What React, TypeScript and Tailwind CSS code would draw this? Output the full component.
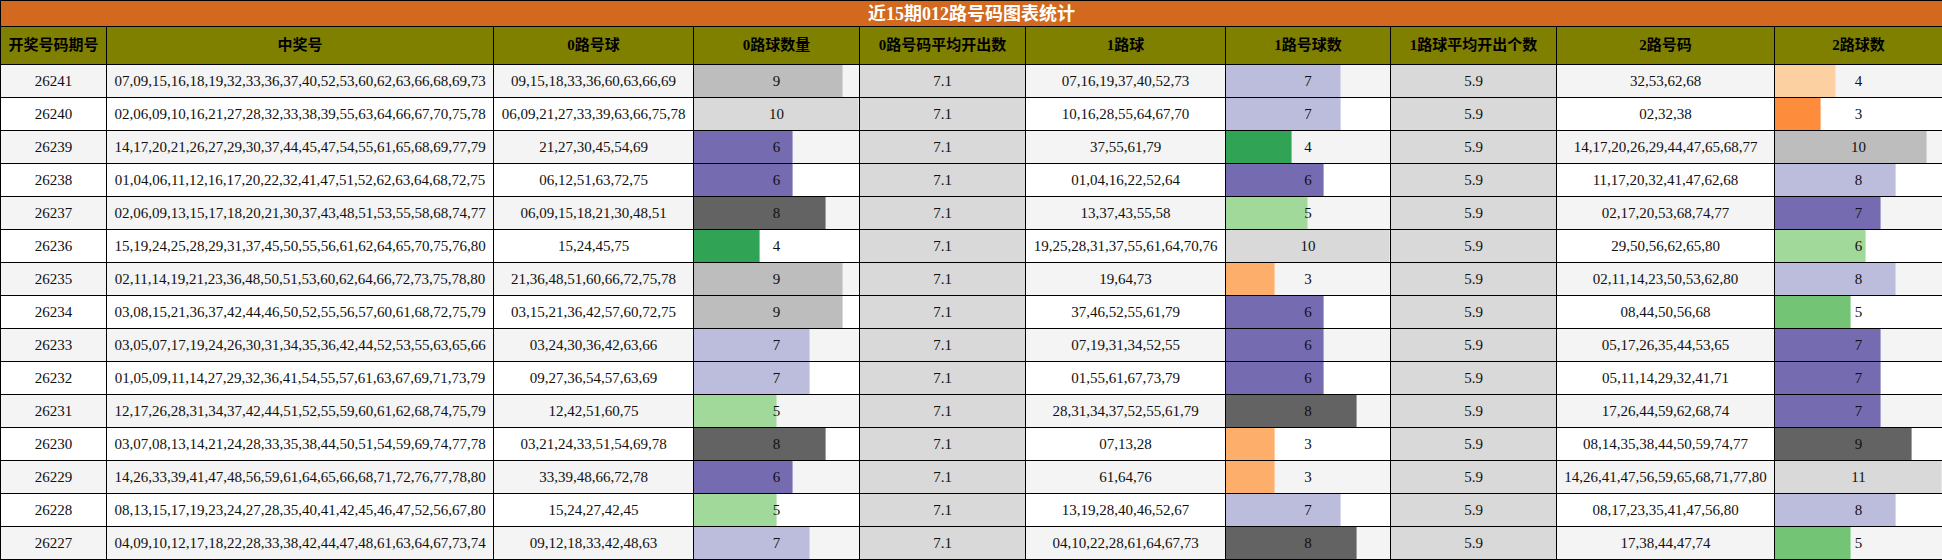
import React from "react";

type Row = [number, string, string, number, string, number, string, number];

const rows: Row[] = [
  [26241, "07,09,15,16,18,19,32,33,36,37,40,52,53,60,62,63,66,68,69,73", "09,15,18,33,36,60,63,66,69", 9, "07,16,19,37,40,52,73", 7, "32,53,62,68", 4],
  [26240, "02,06,09,10,16,21,27,28,32,33,38,39,55,63,64,66,67,70,75,78", "06,09,21,27,33,39,63,66,75,78", 10, "10,16,28,55,64,67,70", 7, "02,32,38", 3],
  [26239, "14,17,20,21,26,27,29,30,37,44,45,47,54,55,61,65,68,69,77,79", "21,27,30,45,54,69", 6, "37,55,61,79", 4, "14,17,20,26,29,44,47,65,68,77", 10],
  [26238, "01,04,06,11,12,16,17,20,22,32,41,47,51,52,62,63,64,68,72,75", "06,12,51,63,72,75", 6, "01,04,16,22,52,64", 6, "11,17,20,32,41,47,62,68", 8],
  [26237, "02,06,09,13,15,17,18,20,21,30,37,43,48,51,53,55,58,68,74,77", "06,09,15,18,21,30,48,51", 8, "13,37,43,55,58", 5, "02,17,20,53,68,74,77", 7],
  [26236, "15,19,24,25,28,29,31,37,45,50,55,56,61,62,64,65,70,75,76,80", "15,24,45,75", 4, "19,25,28,31,37,55,61,64,70,76", 10, "29,50,56,62,65,80", 6],
  [26235, "02,11,14,19,21,23,36,48,50,51,53,60,62,64,66,72,73,75,78,80", "21,36,48,51,60,66,72,75,78", 9, "19,64,73", 3, "02,11,14,23,50,53,62,80", 8],
  [26234, "03,08,15,21,36,37,42,44,46,50,52,55,56,57,60,61,68,72,75,79", "03,15,21,36,42,57,60,72,75", 9, "37,46,52,55,61,79", 6, "08,44,50,56,68", 5],
  [26233, "03,05,07,17,19,24,26,30,31,34,35,36,42,44,52,53,55,63,65,66", "03,24,30,36,42,63,66", 7, "07,19,31,34,52,55", 6, "05,17,26,35,44,53,65", 7],
  [26232, "01,05,09,11,14,27,29,32,36,41,54,55,57,61,63,67,69,71,73,79", "09,27,36,54,57,63,69", 7, "01,55,61,67,73,79", 6, "05,11,14,29,32,41,71", 7],
  [26231, "12,17,26,28,31,34,37,42,44,51,52,55,59,60,61,62,68,74,75,79", "12,42,51,60,75", 5, "28,31,34,37,52,55,61,79", 8, "17,26,44,59,62,68,74", 7],
  [26230, "03,07,08,13,14,21,24,28,33,35,38,44,50,51,54,59,69,74,77,78", "03,21,24,33,51,54,69,78", 8, "07,13,28", 3, "08,14,35,38,44,50,59,74,77", 9],
  [26229, "14,26,33,39,41,47,48,56,59,61,64,65,66,68,71,72,76,77,78,80", "33,39,48,66,72,78", 6, "61,64,76", 3, "14,26,41,47,56,59,65,68,71,77,80", 11],
  [26228, "08,13,15,17,19,23,24,27,28,35,40,41,42,45,46,47,52,56,67,80", "15,24,27,42,45", 5, "13,19,28,40,46,52,67", 7, "08,17,23,35,41,47,56,80", 8],
  [26227, "04,09,10,12,17,18,22,28,33,38,42,44,47,48,61,63,64,67,73,74", "09,12,18,33,42,48,63", 7, "04,10,22,28,61,64,67,73", 8, "17,38,44,47,74", 5],
];

const c01: Record<number, string> = {
  3: "#fdae6b",
  4: "#31a354",
  5: "#a1d99b",
  6: "#756bb1",
  7: "#bcbddc",
  8: "#636363",
  9: "#bdbdbd",
  10: "#d9d9d9",
};
const c2: Record<number, string> = {
  3: "#fd8d3c",
  4: "#fdd0a2",
  5: "#74c476",
  6: "#a1d99b",
  7: "#756bb1",
  8: "#bcbddc",
  9: "#636363",
  10: "#bdbdbd",
  11: "#d9d9d9",
};

const widths = [106, 387, 200, 166, 166, 200, 165, 166, 218, 168];
const headers = [
  "开奖号码期号",
  "中奖号",
  "0路号球",
  "0路球数量",
  "0路号码平均开出数",
  "1路球",
  "1路号球数",
  "1路球平均开出个数",
  "2路号码",
  "2路球数",
];

function BarCell({ v, max, color }: { v: number; max: number; color: string }) {
  return (
    <td className="border border-black p-0 h-[33px]">
      <div className="relative h-[32px] flex items-center justify-center">
        <div
          className="absolute left-0 top-0 bottom-0 border-r border-white/40"
          style={{ width: `${(v / max) * 100}%`, backgroundColor: color }}
        />
        <span className="relative">{v}</span>
      </div>
    </td>
  );
}

export default function App() {
  return (
    <div className="w-[1942px] h-[560px] bg-white overflow-hidden">
      <table
        className="table-fixed border-collapse w-[1942px] text-[15px] text-[#111] text-center"
        style={{ fontFamily: '"Liberation Serif", "Noto Sans CJK SC", serif' }}
      >
        <colgroup>
          {widths.map((w, i) => (
            <col key={i} style={{ width: w }} />
          ))}
        </colgroup>
        <thead>
          <tr>
            <th
              colSpan={10}
              className="border border-black bg-[#d2691e] text-white text-[18px] font-bold h-[26px] p-0 leading-none"
            >
              近15期012路号码图表统计
            </th>
          </tr>
          <tr>
            {headers.map((h) => (
              <th
                key={h}
                className="border border-black bg-[#808000] text-black font-bold text-[15px] h-[38px] p-0 whitespace-nowrap"
              >
                {h}
              </th>
            ))}
          </tr>
        </thead>
        <tbody>
          {rows.map((r, i) => {
            const bg = i % 2 === 0 ? "bg-[#f4f4f4]" : "bg-white";
            return (
              <tr key={r[0]} className={bg}>
                <td className="border border-black p-0 h-[33px]">{r[0]}</td>
                <td className="border border-black p-0 h-[33px] whitespace-nowrap">{r[1]}</td>
                <td className="border border-black p-0 h-[33px] whitespace-nowrap">{r[2]}</td>
                <BarCell v={r[3]} max={10} color={c01[r[3]]} />
                <td className="border border-black p-0 h-[33px] bg-[#d9d9d9]">7.1</td>
                <td className="border border-black p-0 h-[33px] whitespace-nowrap">{r[4]}</td>
                <BarCell v={r[5]} max={10} color={c01[r[5]]} />
                <td className="border border-black p-0 h-[33px] bg-[#d9d9d9]">5.9</td>
                <td className="border border-black p-0 h-[33px] whitespace-nowrap">{r[6]}</td>
                <BarCell v={r[7]} max={11} color={c2[r[7]]} />
              </tr>
            );
          })}
        </tbody>
      </table>
    </div>
  );
}
